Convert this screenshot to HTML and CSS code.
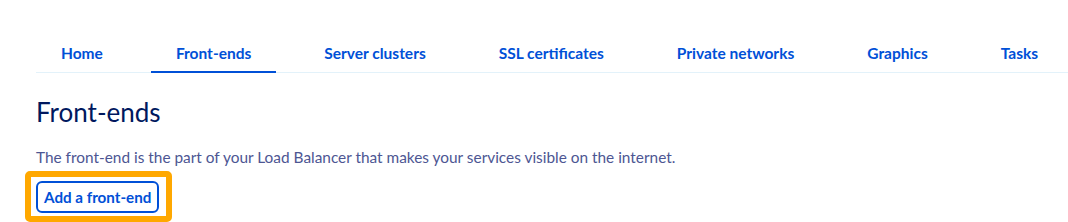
FILE: index.html
```html
<!DOCTYPE html>
<html lang="en">
<head>
<meta charset="utf-8">
<title>Front-ends</title>
<link rel="stylesheet" href="styles.css">
</head>
<body>
<div class="page">
  <nav class="tabs">
    <a class="tab">Home</a>
    <a class="tab active">Front-ends</a>
    <a class="tab">Server clusters</a>
    <a class="tab">SSL certificates</a>
    <a class="tab">Private networks</a>
    <a class="tab">Graphics</a>
    <a class="tab">Tasks</a>
  </nav>
  <h1 class="title">Front-ends</h1>
  <p class="lead">The front-end is the part of your Load Balancer that makes your services visible on the internet.</p>
  <div class="highlight"><button class="btn">Add a front-end</button></div>
</div>
</body>
</html>
```
FILE: styles.css
```css
html, body {
  margin: 0;
  padding: 0;
  background: #ffffff;
}
body {
  font-family: "Lato", "Open Sans", sans-serif;
  overflow: hidden;
}
.page {
  padding: 33px 0 0 36px;
}
.tabs {
  display: flex;
  gap: 23px;
  border-bottom: 1px solid #e3f2fa;
}
.tab {
  display: block;
  padding: 10px 25px 8px;
  line-height: 20px;
  font-size: 15.5px;
  font-weight: 700;
  color: #0050d7;
  border-bottom: 2px solid transparent;
  margin-bottom: -1px;
  white-space: nowrap;
}
.tab.active {
  border-bottom-color: #0050d7;
}
.title {
  margin: 23px 0 0;
  font-size: 26px;
  line-height: 32px;
  font-weight: 400;
  color: #00185e;
}
.lead {
  margin: 19px 0 0;
  font-size: 15.4px;
  line-height: 20px;
  color: #4d5693;
}
.highlight {
  width: max-content;
  margin: 4px 0 0 -11px;
  padding: 4px 7px 3px 5px;
  border: 6px solid #ffa800;
  border-radius: 5px;
}
.btn {
  display: block;
  height: 32px;
  padding: 0 6px;
  border: 2px solid #0050d7;
  border-radius: 6px;
  background: #ffffff;
  color: #0050d7;
  font-family: inherit;
  font-size: 15.2px;
  font-weight: 700;
  line-height: 28px;
}
```
